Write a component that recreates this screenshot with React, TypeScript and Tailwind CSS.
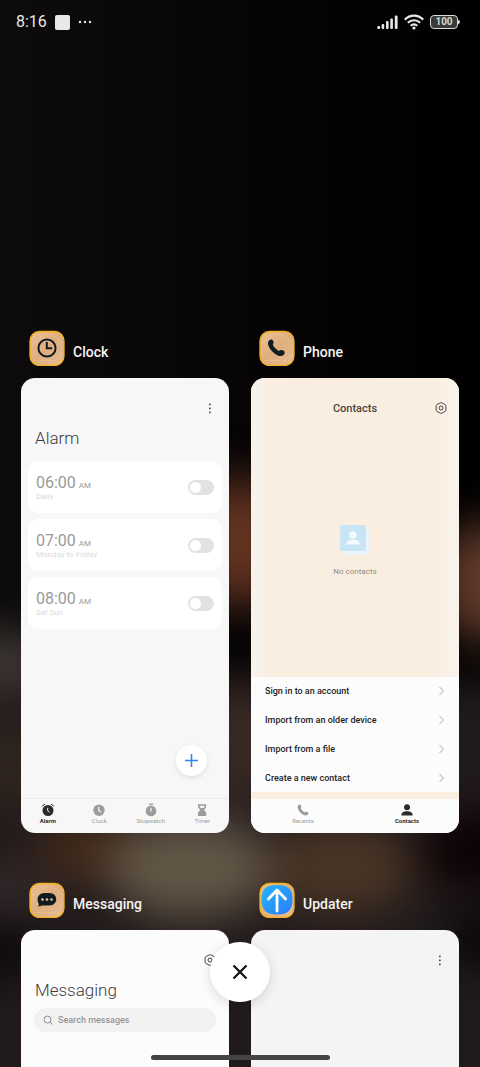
import React, { useState } from "react";

const alarms = [
  { id: "a6", time: "06:00", repeat: "Daily" },
  { id: "a7", time: "07:00", repeat: "Monday to Friday" },
  { id: "a8", time: "08:00", repeat: "Sat Sun" },
];

const contactActions = [
  "Sign in to an account",
  "Import from an older device",
  "Import from a file",
  "Create a new contact",
];

function Wallpaper() {
  return (
    <svg
      aria-hidden="true"
      className="absolute inset-0 h-full w-full"
      viewBox="0 0 480 1067"
      preserveAspectRatio="none"
    >
      <defs>
        <linearGradient id="wp-base" x1="0" y1="0" x2="1" y2="0">
          <stop offset="0" stopColor="#0d0b0b" />
          <stop offset="0.6" stopColor="#050304" />
          <stop offset="1" stopColor="#000000" />
        </linearGradient>
        <filter id="wp-blur" filterUnits="userSpaceOnUse" x="-200" y="300" width="900" height="1100" colorInterpolationFilters="sRGB">
          <feGaussianBlur stdDeviation="22" />
        </filter>
        <filter id="wp-soft" filterUnits="userSpaceOnUse" x="-200" y="300" width="900" height="700" colorInterpolationFilters="sRGB">
          <feGaussianBlur stdDeviation="22" />
        </filter>
      </defs>
      <rect width="480" height="1067" fill="url(#wp-base)" />
      <g filter="url(#wp-blur)">
        <rect x="-100" y="680" width="680" height="500" fill="#211a1b" />
        <ellipse cx="0" cy="660" rx="50" ry="28" fill="#433c38" />
        <ellipse cx="6" cy="765" rx="50" ry="40" fill="#30251f" />
        <ellipse cx="240" cy="740" rx="36" ry="60" fill="#3c2b25" />
        <ellipse cx="95" cy="850" rx="60" ry="30" fill="#452b19" />
        <ellipse cx="190" cy="868" rx="84" ry="50" fill="#625646" />
        <ellipse cx="340" cy="868" rx="74" ry="44" fill="#4a3525" />
        <ellipse cx="480" cy="850" rx="60" ry="40" fill="#0c0103" />
        <ellipse cx="490" cy="940" rx="44" ry="24" fill="#000000" />
        <ellipse cx="-10" cy="950" rx="50" ry="28" fill="#0a0607" />
        <ellipse cx="-10" cy="890" rx="66" ry="20" fill="#382c2e" />
      </g>
      <g filter="url(#wp-soft)">
        <ellipse cx="240" cy="542" rx="42" ry="66" fill="#663522" />
        <ellipse cx="486" cy="582" rx="48" ry="60" fill="#613a2a" />
      </g>
    </svg>
  );
}

function StatusBar() {
  return (
    <header className="flex h-11 shrink-0 items-center justify-between pl-4 pr-5 text-[#e8e8e8]">
      <div className="flex items-center gap-2">
        <span className="text-base leading-5">8:16</span>
        <span className="size-[15px] rounded-xs bg-[#e8e8e8]" />
        <svg aria-hidden="true" width="14" height="4" viewBox="0 0 14 4" fill="currentColor">
          <circle cx="2" cy="2" r="1.2" />
          <circle cx="7" cy="2" r="1.2" />
          <circle cx="12" cy="2" r="1.2" />
        </svg>
      </div>
      <div className="flex items-center gap-[6px]">
        <svg aria-hidden="true" width="21" height="14" viewBox="0 0 21 14" fill="currentColor">
          <rect x="0.3" y="11" width="2.8" height="3" rx="1" />
          <rect x="4.6" y="9" width="2.6" height="5" rx="1" />
          <rect x="9" y="6" width="2.6" height="8" rx="1" />
          <rect x="13.3" y="3.5" width="2.6" height="10.5" rx="1" />
          <rect x="17.8" y="0.5" width="2.8" height="13.5" rx="1" />
        </svg>
        <svg aria-hidden="true" width="20" height="16" viewBox="0 0 20 16" fill="none" stroke="currentColor" strokeWidth="2.2">
          <path d="M0.8 5.6C6 .4 14 .4 19.2 5.6" />
          <path d="M3.8 8.8c3.5-3.4 8.9-3.4 12.4 0" />
          <path d="M6.7 11.8c1.9-1.7 4.7-1.7 6.6 0" />
          <circle cx="10" cy="14" r="1.6" fill="currentColor" stroke="none" />
        </svg>
        <div className="flex items-center">
          <span className="flex h-[14px] w-7 items-center justify-center rounded-[4px] border border-[#d8d8d8] bg-[#3a3a3a] text-[10px] font-bold leading-3 text-[#d8d8d8]">
            100
          </span>
          <span className="h-1 w-0.5 rounded-r-sm bg-[#d8d8d8]" />
        </div>
      </div>
    </header>
  );
}

function AppBadge({ children }: { children: React.ReactNode }) {
  return (
    <svg aria-hidden="true" width="36" height="36" viewBox="0 0 36 36" fill="none">
      <defs>
        <linearGradient id="badge-wood" x1="0" y1="0" x2="1" y2="1">
          <stop offset="0" stopColor="#e9c093" />
          <stop offset="0.5" stopColor="#dfae7e" />
          <stop offset="1" stopColor="#e6bc92" />
        </linearGradient>
        <linearGradient id="badge-blue" x1="0" y1="0" x2="1" y2="1">
          <stop offset="0" stopColor="#27b4fb" />
          <stop offset="1" stopColor="#2a7dfa" />
        </linearGradient>
      </defs>
      <rect x="1" y="1.5" width="34" height="34" rx="9.5" fill="url(#badge-wood)" stroke="#f2b21c" strokeWidth="1.3" />
      <path d="M4 31c9-1.5 18-.5 27 .8M20 3c4 3 8 4 13 9M3 14c6-4 10-7 15-11M22 34c4-4 8-8 12-10" stroke="#f3d3aa" strokeWidth="0.6" opacity="0.6" />
      {children}
    </svg>
  );
}

function ClockGlyph() {
  return (
    <AppBadge>
      <circle cx="18" cy="18" r="8.6" stroke="#111c22" strokeWidth="2" />
      <path d="M17.8 12v6.3h5.4" stroke="#111c22" strokeWidth="2" />
    </AppBadge>
  );
}

function PhoneGlyph() {
  return (
    <AppBadge>
      <path
        d="M10 10.5c1.600-1.500 3.600-1 4.300.5.500 1.200.3 2.600-.5 3.700 1.300 2.700 3.400 4.900 6 6.200 1.500-1.200 3.500-1.200 5-.1 1.400 1.100 1 3-.3 4.200-1.400 1.400-3.700 1.400-5.700.5-4-1.900-7.600-5.500-9.200-9.500-.8-1.900-.8-4.200.4-5.500z"
        fill="#111c22"
      />
    </AppBadge>
  );
}

function MessageGlyph() {
  return (
    <AppBadge>
      <path
        d="M15.5 11h5c4 0 6.700 2.800 6.700 6.200s-2.700 6.200-6.700 6.200H12.500c-1 .8-2.200 1-3.600.8.700-.7 1-1.400 1-2.200-.8-1.200-1.300-2.900-1.300-4.800 0-3.400 2.900-6.200 6.900-6.200z"
        fill="#111c22"
      />
      <circle cx="13.5" cy="17.5" r="1.3" fill="#e9c393" />
      <circle cx="18" cy="17.5" r="1.3" fill="#e9c393" />
      <circle cx="22.5" cy="17.5" r="1.3" fill="#e9c393" />
    </AppBadge>
  );
}

function UpdaterGlyph() {
  return (
    <AppBadge>
      <path
        d="M18 3C29 3 33.5 7 33.5 17.5S29 32.5 18 32.5 2.5 28 2.5 17.5 7 3 18 3z"
        fill="url(#badge-blue)"
      />
      <path d="M18 29V8.5M9.4 17l8.6-9 8.6 9" stroke="#fff" strokeWidth="2.8" strokeLinecap="round" strokeLinejoin="round" />
    </AppBadge>
  );
}

function DotsIcon() {
  return (
    <svg aria-hidden="true" width="12" height="12" viewBox="0 0 12 12" fill="#4c4c4c">
      <rect x="5" y="1.5" width="1.7" height="1.7" rx="0.5" />
      <rect x="5" y="5.5" width="1.7" height="1.7" rx="0.5" />
      <rect x="5" y="9.5" width="1.7" height="1.7" rx="0.5" />
    </svg>
  );
}

function HexGearIcon() {
  return (
    <svg aria-hidden="true" width="12" height="12" viewBox="0 0 12 12" fill="none" stroke="#4a4541" strokeWidth="1">
      <path d="M5.3.8Q6 .4 6.7.8L10.2 2.7Q10.9 3.1 10.9 3.9V8.1Q10.9 8.9 10.2 9.3L6.7 11.2Q6 11.6 5.3 11.2L1.8 9.3Q1.1 8.9 1.1 8.1V3.9Q1.1 3.1 1.8 2.7Z" />
      <circle cx="6" cy="6" r="2" />
    </svg>
  );
}

function TaskCard({ name, icon, className, children }: {
  name: string; icon: React.ReactNode; className: string; children?: React.ReactNode;
}) {
  return (
    <section className="min-w-0">
      <div className="flex h-12 items-start gap-2 pl-2">
        {icon}
        <h2 className="pt-3 text-sm font-medium leading-5 text-[#f4f4f4]">{name}</h2>
      </div>
      <div className={`flex aspect-[208/455] flex-col overflow-hidden rounded-[14px] ${className}`}>
        {children}
      </div>
    </section>
  );
}

function AlarmRow({ id, time, repeat }: { id: string; time: string; repeat: string }) {
  const [on, setOn] = useState(false);
  return (
    <li className="flex h-[52px] items-center justify-between rounded-[10px] bg-white px-2">
      <label htmlFor={id} className="flex flex-col pt-0.5">
        <span className="flex items-baseline gap-[3px] text-[#9a9a9a]">
          <span className="text-base leading-[18px]">{time}</span>
          <span className="text-[8px] leading-[10px]">AM</span>
        </span>
        <span className="text-[8px] leading-[10px] text-[#dadada]">{repeat}</span>
      </label>
      <input
        id={id}
        type="checkbox"
        role="switch"
        checked={on}
        onChange={(e) => setOn(e.target.checked)}
        className="flex h-[15px] w-[26px] appearance-none items-center rounded-full bg-[#e2e2e2] px-[2px] before:size-[11px] before:rounded-full before:bg-white checked:justify-end checked:bg-[#2b84f5]"
      />
    </li>
  );
}

function Tab({ label, active, children }: { label: string; active?: boolean; children: React.ReactNode }) {
  return (
    <button
      type="button"
      className={active
        ? "flex flex-1 flex-col items-center text-[6px] font-bold leading-2 text-[#2b2b2b]"
        : "flex flex-1 flex-col items-center text-[6px] leading-2 text-[#9c9c9c]"}
    >
      <svg aria-hidden="true" width="14" height="14" viewBox="0 0 14 14" fill="currentColor">
        {children}
      </svg>
      <span>{label}</span>
    </button>
  );
}

function ClockApp() {
  return (
    <>
      <div className="flex h-[46px] items-end justify-end pb-[10px] pr-[13px]">
        <button type="button" aria-label="More options"><DotsIcon /></button>
      </div>
      <h3 className="px-[14px] text-[17px] font-light leading-7 text-[#3c3c3c]">Alarm</h3>
      <ul className="mt-[9px] flex flex-col gap-[6px] px-[7px]">
        {alarms.map((a) => <AlarmRow key={a.id} {...a} />)}
      </ul>
      <div className="mt-auto flex justify-end pb-[22px] pr-[22px]">
        <button
          type="button"
          aria-label="Add alarm"
          className="flex size-[31px] items-center justify-center rounded-full bg-white shadow-[0_2px_5px_rgba(0,0,0,0.10)]"
        >
          <svg aria-hidden="true" width="13" height="13" viewBox="0 0 13 13" stroke="#2b84f5" strokeWidth="1.6">
            <path d="M6.5 0v13M0 6.5h13" />
          </svg>
        </button>
      </div>
      <nav className="flex h-[35px] shrink-0 border-t border-[#ebebeb] px-px pt-1">
        <Tab label="Alarm" active>
          <circle cx="7" cy="7.5" r="5.5" />
          <path d="M1.3 3.5Q2 1.8 4 1.2M12.7 3.5Q12 1.8 10 1.2" fill="none" stroke="currentColor" />
          <path d="M6.7 4.8v3l1.6 1.5" fill="none" stroke="#f7f7f7" />
        </Tab>
        <Tab label="Clock">
          <circle cx="7" cy="7.2" r="5.7" />
          <path d="M6.7 3.8v3.7l2.4 1.7" fill="none" stroke="#f7f7f7" strokeWidth="1.2" />
        </Tab>
        <Tab label="Stopwatch">
          <circle cx="7" cy="7.9" r="5.3" />
          <rect x="4.8" y="0.6" width="4.6" height="1.2" rx="0.4" />
          <path d="M7 4.8v3.8" stroke="#f7f7f7" strokeWidth="1.2" />
        </Tab>
        <Tab label="Timer">
          <path d="M3 1.2h8.2v2.3c0 1.8-1.5 2.6-2.4 3.5.9.9 2.4 1.700 2.4 3.5V13H3v-2.5C3 8.7 4.5 7.9 5.4 7 4.5 6.1 3 5.3 3 3.5z" />
          <path d="M4.5 2.7h5.2c0 1.2-.7 1.9-1.7 2.4H6.2C5.2 4.6 4.5 3.9 4.5 2.7z" fill="#f7f7f7" />
        </Tab>
      </nav>
    </>
  );
}

function ContactsApp() {
  return (
    <>
      <div className="flex flex-1 flex-col bg-[linear-gradient(to_right,#f9f2ea_0%,#f9f2e9_5%,#faeee0_9%,#faeee0_88%,#f9f2e9_94%,#f9f2ea_100%)]">
        <div className="grid h-[46px] grid-cols-[1fr_auto_1fr] items-end pb-[7px] pr-3">
          <h3 className="col-start-2 pl-3 text-[11px] font-medium leading-4 text-[#4a4541]">Contacts</h3>
          <button type="button" aria-label="Contact settings" className="mb-[3px] justify-self-end">
            <HexGearIcon />
          </button>
        </div>
        <div className="flex flex-1 flex-col items-center pt-[100px]">
          <svg aria-hidden="true" width="32" height="32" viewBox="0 0 32 32">
            <rect x="5" y="5" width="26" height="26" rx="2" fill="#e9f4fb" />
            <rect x="1" y="1" width="26" height="26" rx="2" fill="#c8e5f5" />
            <circle cx="14" cy="11" r="3.7" fill="#f2faff" />
            <path d="M7 20.5c0-3 3-4.7 7-4.7s7 1.7 7 4.7z" fill="#f2faff" />
          </svg>
          <p className="mt-[10px] text-[8px] leading-3 text-[#93897f]">No contacts</p>
        </div>
      </div>
      <ul className="grid h-[115px] grid-rows-4 bg-[#fcfcfc]">
        {contactActions.map((label) => (
          <li key={label} className="flex">
            <button type="button" className="flex flex-1 items-center justify-between px-[14px] text-[9px] font-medium leading-3 text-[#1c1c1c]">
              {label}
              <svg aria-hidden="true" width="7" height="10" viewBox="0 0 7 10" fill="none" stroke="#a8a8a8">
                <path d="M1.5 1l4 4-4 4" />
              </svg>
            </button>
          </li>
        ))}
      </ul>
      <nav className="flex h-[41px] shrink-0 border-t-[7px] border-[#faeee0] bg-[#fcfcfc] pt-1">
        <Tab label="Recents">
          <path d="M2.3 2.2c.9-.9 2.3-.9 2.7.2.3.9.5 1.9-.2 2.900.7 1.700 2 3 3.800 3.900.9-.7 2-.6 3-.2 1.100.5 1.100 1.800.2 2.700-.8.800-2 .9-3.200.5C5.300 11.100 3 8.700 1.900 5.500c-.4-1.300-.4-2.500.4-3.300z" />
        </Tab>
        <Tab label="Contacts" active>
          <circle cx="7" cy="4.2" r="3" />
          <path d="M1.3 12.5c0-2.9 2.4-4.2 5.7-4.2s5.7 1.3 5.7 4.2z" />
        </Tab>
      </nav>
    </>
  );
}

function MessagingApp() {
  return (
    <>
      <div className="flex h-[46px] items-end justify-end pb-[10px] pr-[13px]">
        <button type="button" aria-label="Messaging settings"><HexGearIcon /></button>
      </div>
      <h3 className="px-[14px] text-[17px] font-light leading-7 text-[#3c3c3c]">Messaging</h3>
      <div className="mx-[13px] mt-1 flex h-6 items-center gap-[5px] rounded-full bg-[#f2f2f2] px-[9px]">
        <svg aria-hidden="true" width="10" height="10" viewBox="0 0 10 10" fill="none" stroke="#8c8c8c">
          <circle cx="4.5" cy="4.5" r="3.5" />
          <path d="M7 7l2.5 2.5" />
        </svg>
        <input
          type="text"
          aria-label="Search messages"
          placeholder="Search messages"
          className="h-6 min-w-0 flex-1 text-[9px] font-medium outline-none placeholder:text-[#969696]"
        />
      </div>
    </>
  );
}

export default function App() {
  return (
    <div className="relative isolate flex h-screen flex-col overflow-hidden bg-black font-[Roboto,sans-serif]">
      <div className="absolute inset-0 -z-10"><Wallpaper /></div>
      <StatusBar />
      <main className="mt-[286px] grid shrink-0 grid-cols-2 gap-x-[22px] gap-y-[49px] px-[21px]">
        <TaskCard name="Clock" icon={<ClockGlyph />} className="bg-[#f7f7f7]"><ClockApp /></TaskCard>
        <TaskCard name="Phone" icon={<PhoneGlyph />} className="bg-[#fcfcfc]"><ContactsApp /></TaskCard>
        <TaskCard name="Messaging" icon={<MessageGlyph />} className="bg-[#fcfcfc]"><MessagingApp /></TaskCard>
        <TaskCard name="Updater" icon={<UpdaterGlyph />} className="bg-[#f4f4f4]">
          <div className="flex h-[46px] items-end justify-end pb-[10px] pr-[13px]">
            <button type="button" aria-label="Updater options"><DotsIcon /></button>
          </div>
        </TaskCard>
      </main>

      {/* floats over the task list */}
      <div className="absolute inset-x-0 bottom-[7px] flex flex-col items-center gap-[53px]">
        <button
          type="button"
          aria-label="Close all"
          className="flex size-15 items-center justify-center rounded-full bg-white shadow-[0_3px_12px_rgba(0,0,0,0.14)]"
        >
          <svg aria-hidden="true" width="16" height="16" viewBox="0 0 16 16" stroke="#111" strokeWidth="2.2">
            <path d="M1.5 1.5l13 13M14.5 1.5l-13 13" />
          </svg>
        </button>
        <span className="h-[5px] w-[179px] rounded-full bg-[#444444]" />
      </div>
    </div>
  );
}
